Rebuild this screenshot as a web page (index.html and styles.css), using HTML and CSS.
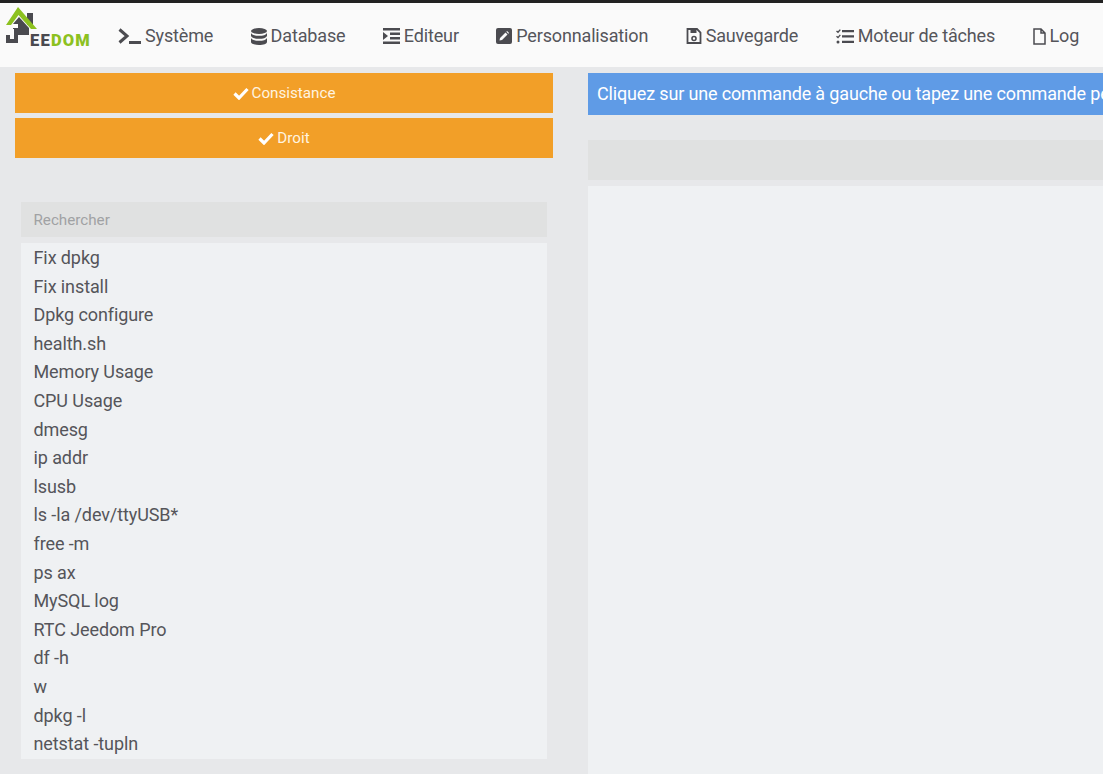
FILE: index.html
```html
<!DOCTYPE html>
<html lang="fr">
<head>
<meta charset="utf-8">
<title>Jeedom</title>
<link rel="stylesheet" href="styles.css">
</head>
<body>
<header class="topbar">
  <a class="logo" href="#">
    <svg class="logo-mark" viewBox="0 0 31 36" width="31" height="36">
      <rect x="21" y="6" width="6" height="12" fill="#4a4a4f"/>
      <path d="M7 17 13 10 23 21V28H7Z" fill="#4a4a4f"/>
      <path d="M12 0 31 22H25L12.500 8 5 18H0Z" fill="#8cc11f"/>
      <rect x="7" y="17" width="5" height="4" fill="#fff"/>
      <path d="M7 22H12V28H7Z" fill="#fff"/>
      <path d="M8 22H12V36H0V28H4V32H8Z" fill="#4a4a4f"/>
    </svg>
    <span class="logo-text">EE<span class="logo-green">DOM</span></span>
  </a>
  <nav class="menu">
    <a class="menu-item" href="#"><svg class="ico ico-term" viewBox="0 0 24 16"><path d="M1.500 1.500 9 8l-7.500 6.500" fill="none" stroke="#4b4b50" stroke-width="3"/><rect x="11" y="13" width="12" height="3" fill="#4b4b50"/></svg><span>Système</span></a>
    <a class="menu-item" href="#"><svg class="ico ico-db" viewBox="0 0 16 17"><ellipse cx="8" cy="3" rx="8" ry="3" fill="#4b4b50"/><path d="M0 5c1 2 4 2.800 8 2.800S15 7 16 5v3c-1 2-4 2.800-8 2.800S1 10 0 8Zm0 5c1 2 4 2.800 8 2.800s7-.8 8-2.800v4c0 1.700-3.500 3-8 3s-8-1.300-8-3Z" fill="#4b4b50"/></svg><span>Database</span></a>
    <a class="menu-item" href="#"><svg class="ico ico-ed" viewBox="0 0 17 16"><path d="M0 0h17v2.500H0ZM0 13.500h17V16H0ZM7 4.500h10V7H7ZM7 9h10v2.500H7ZM0 4l5 4-5 4Z" fill="#4b4b50"/></svg><span>Editeur</span></a>
    <a class="menu-item" href="#"><svg class="ico ico-pen" viewBox="0 0 16 16"><rect width="16" height="16" rx="2" fill="#4b4b50"/><path d="M3.500 12.500 4 10l5.500-5.500 2 2L6 12ZM10.300 3.800l.8-.8 2 2-.8.800Z" fill="#fafafa"/></svg><span>Personnalisation</span></a>
    <a class="menu-item" href="#"><svg class="ico ico-save" viewBox="0 0 16 16"><path d="M1.500 1H11l3.500 3.500V15h-13Z" fill="none" stroke="#4b4b50" stroke-width="1.800"/><rect x="4.500" y="1.500" width="6" height="3.500" fill="#4b4b50"/><circle cx="8" cy="10.500" r="2" fill="none" stroke="#4b4b50" stroke-width="1.600"/></svg><span>Sauvegarde</span></a>
    <a class="menu-item" href="#"><svg class="ico ico-task" viewBox="0 0 18 15"><path d="M.5 2 2 3.300 4.300.6M.5 7.300 2 8.600l2.300-2.700" fill="none" stroke="#4b4b50" stroke-width="1.400"/><circle cx="2" cy="13" r="1.500" fill="#4b4b50"/><path d="M6 1h12v2.200H6ZM6 6.300h12v2.200H6ZM6 11.800h12V14H6Z" fill="#4b4b50"/></svg><span>Moteur de tâches</span></a>
    <a class="menu-item" href="#"><svg class="ico ico-log" viewBox="0 0 13 17"><path d="M1 1h7l4 4v11H1Z M8 1v4h4" fill="none" stroke="#4b4b50" stroke-width="1.500"/></svg><span>Log</span></a>
  </nav>
</header>
<main class="layout">
  <section class="left">
    <a class="btn" href="#"><svg class="check" viewBox="0 0 16 13"><path d="M1.500 6.500 6 11l8.500-9" fill="none" stroke="#fff" stroke-width="3.200"/></svg> Consistance</a>
    <a class="btn" href="#"><svg class="check" viewBox="0 0 16 13"><path d="M1.500 6.500 6 11l8.500-9" fill="none" stroke="#fff" stroke-width="3.200"/></svg> Droit</a>
    <div class="search">Rechercher</div>
    <ul class="cmds">
      <li>Fix dpkg</li>
      <li>Fix install</li>
      <li>Dpkg configure</li>
      <li>health.sh</li>
      <li>Memory Usage</li>
      <li>CPU Usage</li>
      <li>dmesg</li>
      <li>ip addr</li>
      <li>lsusb</li>
      <li>ls -la /dev/ttyUSB*</li>
      <li>free -m</li>
      <li>ps ax</li>
      <li>MySQL log</li>
      <li>RTC Jeedom Pro</li>
      <li>df -h</li>
      <li>w</li>
      <li>dpkg -l</li>
      <li>netstat -tupln</li>
    </ul>
  </section>
  <section class="right">
    <div class="alert">Cliquez sur une commande à gauche ou tapez une commande personnalisée ci-dessous</div>
    <div class="cmd-input"></div>
    <div class="result"></div>
  </section>
</main>
</body>
</html>
```
FILE: styles.css
```css
* { box-sizing: border-box; }
html, body { margin: 0; height: 100%; overflow: hidden; }
body {
  background: #e7e8ea;
  font-family: Roboto, "Liberation Sans", sans-serif;
  color: #55555a;
}
a { color: inherit; text-decoration: none; }
.topbar {
  height: 67px;
  background: #fafafa;
  border-top: 3px solid #222;
  display: flex;
  align-items: flex-start;
}
.logo {
  width: 118px;
  height: 64px;
  flex: none;
  padding: 4px 0 0 6px;
  display: flex;
  align-items: flex-start;
}
.logo-mark { flex: none; display: block; }
.logo-text {
  margin: 24px 0 0 -7px;
  font: 900 16.500px/20px Roboto, sans-serif;
  letter-spacing: 1.200px;
  color: #4a4a4f;
}
.logo-green { color: #8cc11f; }
.menu { display: flex; gap: 37.400px; height: 64px; align-items: center; margin-top: 1px; }
.menu-item {
  display: flex;
  align-items: center;
  font-size: 18px;
  line-height: 24px;
  letter-spacing: -.15px;
  white-space: nowrap;
}
.ico { display: block; flex: none; }
.ico-term { width: 24px; height: 16px; margin-right: 3px; }
.ico-db { width: 16px; height: 17px; margin-right: 4px; }
.ico-ed { width: 17px; height: 16px; margin-right: 4px; }
.ico-pen { width: 16px; height: 16px; margin-right: 4px; }
.ico-save { width: 16px; height: 16px; margin-right: 4px; }
.ico-task { width: 18px; height: 15px; margin-right: 4px; }
.ico-log { width: 13px; height: 17px; margin-right: 4px; }
.layout { display: flex; height: 707px; }
.left { width: 588px; flex: none; padding: 6px 35px 0 15px; display: flex; flex-direction: column; }
.btn {
  height: 40px;
  margin-bottom: 5px;
  background: #f29f28;
  color: #fff4e0;
  font-size: 15.200px;
  display: flex;
  align-items: center;
  justify-content: center;
  gap: 3px;
}
.check { width: 16px; height: 13px; display: block; }
.search {
  margin: 39px 6px 6px;
  height: 35px;
  background: #e0e1e1;
  color: #a0a2a4;
  font-size: 15.200px;
  line-height: 36px;
  padding-left: 12.500px;
}
.cmds {
  list-style: none;
  margin: 0 6px;
  padding: 1px 12.500px 0;
  height: 516px;
  background: #eff1f3;
  font-size: 18px;
  letter-spacing: -.1px;
}
.cmds li { height: 28.600px; line-height: 28.600px; white-space: nowrap; }
.right { flex: 1; min-width: 0; padding-top: 6px; display: flex; flex-direction: column; }
.alert {
  height: 42px;
  background: #5f9be6;
  color: #fff;
  font-size: 18px;
  letter-spacing: -.16px;
  line-height: 42px;
  padding-left: 9px;
  white-space: nowrap;
  overflow: hidden;
}
.cmd-input { height: 40px; margin-top: 25px; background: #e0e1e1; }
.result { flex: 1; margin-top: 6px; background: #eff1f3; }
```
